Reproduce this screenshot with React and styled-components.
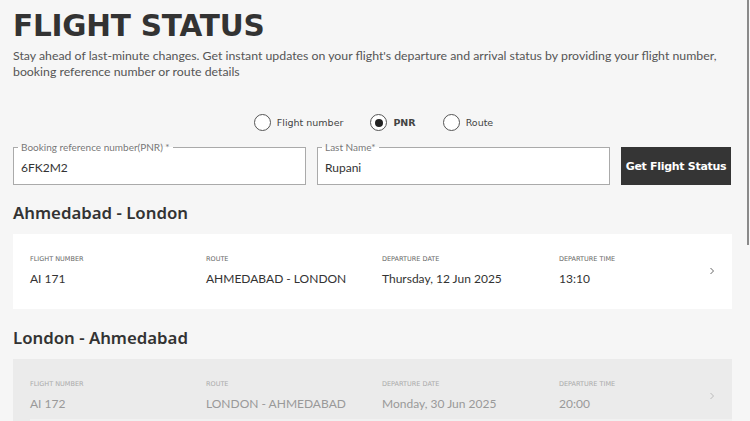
import React, { useState } from 'react';
import styled, { createGlobalStyle } from 'styled-components';

const GlobalStyle = createGlobalStyle`
  html, body {
    margin: 0;
    padding: 0;
    background: #f6f6f6;
  }
  body {
    font-family: 'Lato', 'Noto Sans', sans-serif;
    color: #333;
    overflow: hidden;
  }
`;

const Page = styled.div`
  position: relative;
  width: 750px;
  height: 421px;
  overflow: hidden;
  padding: 9px 18px 0 13px;
  box-sizing: border-box;
`;

const ScrollThumb = styled.div`
  position: absolute;
  top: 0;
  right: 1px;
  width: 2px;
  height: 245px;
  background: #8a8a8a;
`;

const Title = styled.h1`
  margin: 0;
  font-family: 'DejaVu Sans', sans-serif;
  font-weight: bold;
  font-size: 29.5px;
  letter-spacing: -0.2px;
  line-height: 35px;
  color: #333;
`;

const Intro = styled.p`
  margin: 4px 0 0;
  font-size: 12.3px;
  line-height: 16px;
  color: #555;
  max-width: 719px;
`;

const RadioRow = styled.div`
  display: flex;
  justify-content: center;
  gap: 27px;
  margin-top: 34px;
  padding-left: 2px;
`;

const RadioOption = styled.label`
  display: flex;
  align-items: center;
  gap: 6px;
  font-family: 'DejaVu Sans', sans-serif;
  font-size: 9.5px;
  font-weight: ${({ checked }) => (checked ? 'bold' : 'normal')};
  color: #444;
  cursor: pointer;
`;

const RadioCircle = styled.span`
  width: 15px;
  height: 15px;
  border: 1px solid #555;
  border-radius: 50%;
  display: flex;
  align-items: center;
  justify-content: center;
  background: #fff;

  &::after {
    content: '';
    width: 8px;
    height: 8px;
    border-radius: 50%;
    background: ${({ checked }) => (checked ? '#222' : 'transparent')};
  }
`;

const FormRow = styled.div`
  display: grid;
  grid-template-columns: 293px 293px 110px;
  gap: 11px;
  margin-top: 16px;
`;

const Field = styled.div`
  padding: 0 7px;
  height: 38px;
  box-sizing: border-box;
  border: 1px solid #aaa;
  background: #fff;
  position: relative;
  display: flex;
  align-items: center;
  min-width: 0;
`;

const Legend = styled.span`
  position: absolute;
  top: -6px;
  left: 4px;
  padding: 0 3px;
  background: linear-gradient(#f6f6f6 50%, #fff 50%);
  font-size: 10px;
  line-height: 11px;
  color: #777;
`;

const Input = styled.input`
  border: none;
  outline: none;
  background: transparent;
  font-family: 'Lato', 'Noto Sans', sans-serif;
  font-size: 12px;
  color: #333;
  width: 100%;
  padding: 3px 0 0;
`;

const SubmitButton = styled.button`
  height: 38px;
  border: none;
  background: #353535;
  color: #fff;
  font-family: 'DejaVu Sans', sans-serif;
  font-weight: bold;
  font-size: 11px;
  letter-spacing: -0.3px;
  padding: 0;
  cursor: pointer;
`;

const SectionTitle = styled.h2`
  margin: ${({ first }) => (first ? '18px' : '19px')} 0 0;
  font-family: 'Noto Sans', 'Lato', sans-serif;
  font-size: 16.8px;
  line-height: 20px;
  font-weight: 600;
  color: #333;
`;

const Card = styled.div`
  margin-top: 11px;
  background: ${({ disabled }) => (disabled ? '#ebebeb' : '#fff')};
  display: grid;
  grid-template-columns: 176px 176px 177px 1fr 24px;
  align-items: center;
  padding: 21px 16px 22px 17px;
  position: relative;
  color: ${({ disabled }) => (disabled ? '#999' : '#333')};
`;

const CardFooter = styled.div`
  grid-column: 1 / -1;
  height: 12px;
  margin: 3px -16px -22px 0;
  background: #f1f1f1;
`;

const Cell = styled.div`
  display: flex;
  flex-direction: column;
  gap: 8px;
`;

const Label = styled.span`
  font-family: 'DejaVu Sans', sans-serif;
  font-size: 6.5px;
  line-height: 8px;
  text-transform: uppercase;
  color: ${({ disabled }) => (disabled ? '#aaa' : '#666')};
`;

const Value = styled.span`
  font-size: 12px;
  line-height: 16px;
  color: inherit;
`;

const Chevron = styled.svg`
  width: 8px;
  height: 8px;
  justify-self: end;
`;

const flights = [
  {
    heading: 'Ahmedabad - London',
    number: 'AI 171',
    route: 'AHMEDABAD - LONDON',
    date: 'Thursday, 12 Jun 2025',
    time: '13:10',
    disabled: false,
  },
  {
    heading: 'London - Ahmedabad',
    number: 'AI 172',
    route: 'LONDON - AHMEDABAD',
    date: 'Monday, 30 Jun 2025',
    time: '20:00',
    disabled: true,
  },
];

const FlightCard = ({ flight }) => (
  <Card disabled={flight.disabled}>
    <Cell>
      <Label disabled={flight.disabled}>Flight number</Label>
      <Value>{flight.number}</Value>
    </Cell>
    <Cell>
      <Label disabled={flight.disabled}>Route</Label>
      <Value>{flight.route}</Value>
    </Cell>
    <Cell>
      <Label disabled={flight.disabled}>Departure date</Label>
      <Value>{flight.date}</Value>
    </Cell>
    <Cell>
      <Label disabled={flight.disabled}>Departure time</Label>
      <Value>{flight.time}</Value>
    </Cell>
    <Chevron viewBox="0 0 8 8">
      <path
        d="M2.5 1 L5.5 4 L2.5 7"
        fill="none"
        stroke={flight.disabled ? '#bbb' : '#666'}
        strokeWidth="1"
      />
    </Chevron>
    {flight.disabled && <CardFooter />}
  </Card>
);

const App = () => {
  const [mode, setMode] = useState('pnr');
  const options = [
    { id: 'flight', label: 'Flight number' },
    { id: 'pnr', label: 'PNR' },
    { id: 'route', label: 'Route' },
  ];

  return (
    <Page>
      <GlobalStyle />
      <Title>FLIGHT STATUS</Title>
      <Intro>
        Stay ahead of last-minute changes. Get instant updates on your flight's departure and
        arrival status by providing your flight number, booking reference number or route details
      </Intro>

      <RadioRow>
        {options.map((o) => (
          <RadioOption key={o.id} checked={mode === o.id} onClick={() => setMode(o.id)}>
            <RadioCircle checked={mode === o.id} />
            {o.label}
          </RadioOption>
        ))}
      </RadioRow>

      <FormRow>
        <Field>
          <Legend>Booking reference number(PNR) *</Legend>
          <Input defaultValue="6FK2M2" />
        </Field>
        <Field>
          <Legend>Last Name*</Legend>
          <Input defaultValue="Rupani" />
        </Field>
        <SubmitButton>Get Flight Status</SubmitButton>
      </FormRow>

      {flights.map((f, i) => (
        <React.Fragment key={f.number}>
          <SectionTitle first={i === 0}>{f.heading}</SectionTitle>
          <FlightCard flight={f} />
        </React.Fragment>
      ))}

      <ScrollThumb />
    </Page>
  );
};

export default App;
